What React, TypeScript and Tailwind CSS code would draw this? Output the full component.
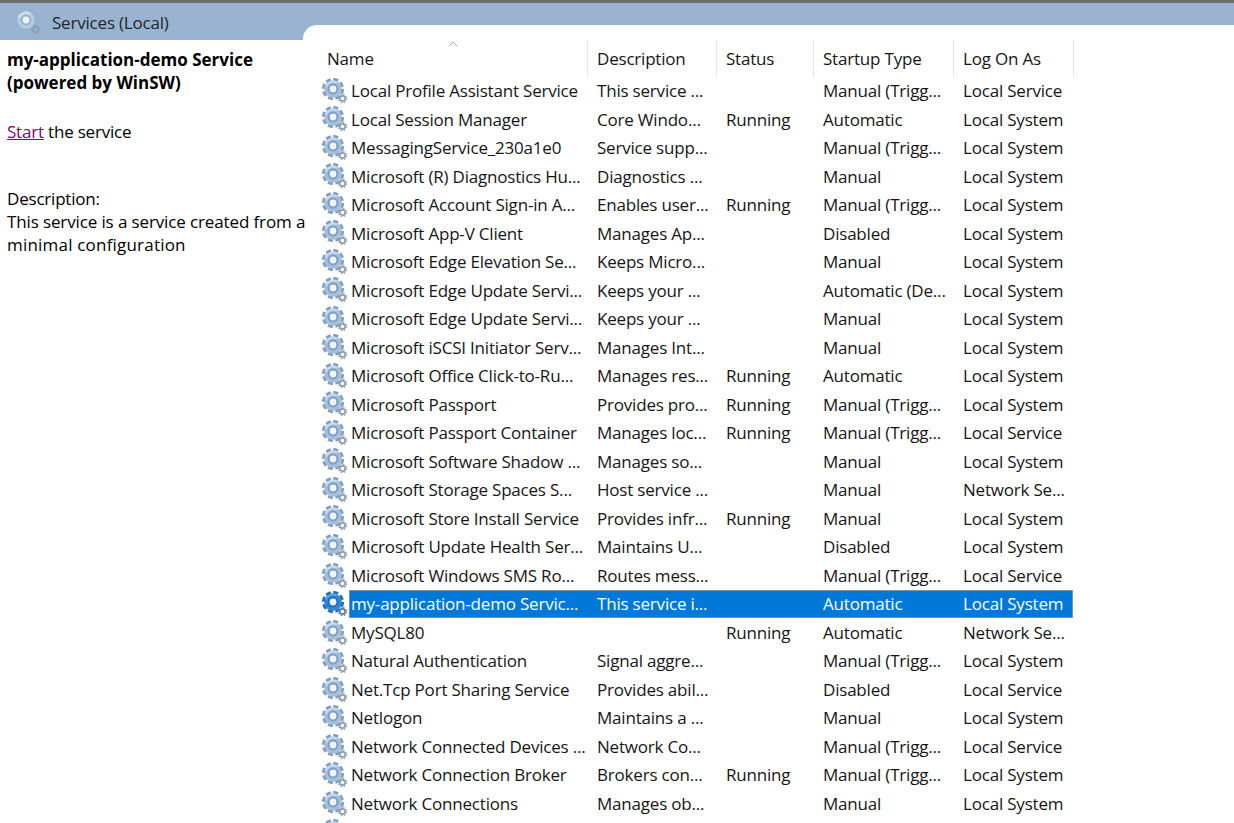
import React from "react";

type Service = { name: string; desc: string; status: string; startup: string; logon: string };

const services: Service[] = [
  { name: "Local Profile Assistant Service", desc: "This service ...", status: "", startup: "Manual (Trigg...", logon: "Local Service" },
  { name: "Local Session Manager", desc: "Core Windo...", status: "Running", startup: "Automatic", logon: "Local System" },
  { name: "MessagingService_230a1e0", desc: "Service supp...", status: "", startup: "Manual (Trigg...", logon: "Local System" },
  { name: "Microsoft (R) Diagnostics Hu...", desc: "Diagnostics ...", status: "", startup: "Manual", logon: "Local System" },
  { name: "Microsoft Account Sign-in A...", desc: "Enables user...", status: "Running", startup: "Manual (Trigg...", logon: "Local System" },
  { name: "Microsoft App-V Client", desc: "Manages Ap...", status: "", startup: "Disabled", logon: "Local System" },
  { name: "Microsoft Edge Elevation Se...", desc: "Keeps Micro...", status: "", startup: "Manual", logon: "Local System" },
  { name: "Microsoft Edge Update Servi...", desc: "Keeps your ...", status: "", startup: "Automatic (De...", logon: "Local System" },
  { name: "Microsoft Edge Update Servi...", desc: "Keeps your ...", status: "", startup: "Manual", logon: "Local System" },
  { name: "Microsoft iSCSI Initiator Serv...", desc: "Manages Int...", status: "", startup: "Manual", logon: "Local System" },
  { name: "Microsoft Office Click-to-Ru...", desc: "Manages res...", status: "Running", startup: "Automatic", logon: "Local System" },
  { name: "Microsoft Passport", desc: "Provides pro...", status: "Running", startup: "Manual (Trigg...", logon: "Local System" },
  { name: "Microsoft Passport Container", desc: "Manages loc...", status: "Running", startup: "Manual (Trigg...", logon: "Local Service" },
  { name: "Microsoft Software Shadow ...", desc: "Manages so...", status: "", startup: "Manual", logon: "Local System" },
  { name: "Microsoft Storage Spaces S...", desc: "Host service ...", status: "", startup: "Manual", logon: "Network Se..." },
  { name: "Microsoft Store Install Service", desc: "Provides infr...", status: "Running", startup: "Manual", logon: "Local System" },
  { name: "Microsoft Update Health Ser...", desc: "Maintains U...", status: "", startup: "Disabled", logon: "Local System" },
  { name: "Microsoft Windows SMS Ro...", desc: "Routes mess...", status: "", startup: "Manual (Trigg...", logon: "Local Service" },
  { name: "my-application-demo Servic...", desc: "This service i...", status: "", startup: "Automatic", logon: "Local System" },
  { name: "MySQL80", desc: "", status: "Running", startup: "Automatic", logon: "Network Se..." },
  { name: "Natural Authentication", desc: "Signal aggre...", status: "", startup: "Manual (Trigg...", logon: "Local System" },
  { name: "Net.Tcp Port Sharing Service", desc: "Provides abil...", status: "", startup: "Disabled", logon: "Local Service" },
  { name: "Netlogon", desc: "Maintains a ...", status: "", startup: "Manual", logon: "Local System" },
  { name: "Network Connected Devices ...", desc: "Network Co...", status: "", startup: "Manual (Trigg...", logon: "Local Service" },
  { name: "Network Connection Broker", desc: "Brokers con...", status: "Running", startup: "Manual (Trigg...", logon: "Local System" },
  { name: "Network Connections", desc: "Manages ob...", status: "", startup: "Manual", logon: "Local System" },
  { name: "", desc: "", status: "", startup: "", logon: "" },
];

const Gear = ({ main, dark, small, shine }: { main: string; dark: string; small: string; shine: string }) => (
  <svg viewBox="0 0 26 26" className="h-[26px] w-[26px]">
    <circle cx="11" cy="11" r="9.6" fill="none" stroke={dark} strokeWidth="3" strokeDasharray="5 2.54" />
    <circle cx="11" cy="11" r="8.8" fill={main} />
    <path d="M3.8 8.5a8 8 0 0 1 11-4" fill="none" stroke={shine} strokeWidth="2" />
    <circle cx="11" cy="11" r="4.4" fill="#eef4fa" stroke={dark} strokeWidth="2" />
    <circle cx="20.5" cy="20.5" r="3.9" fill="none" stroke={small} strokeWidth="1.6" strokeDasharray="1.6 1.46" />
    <circle cx="20.5" cy="20.5" r="2.6" fill="none" stroke={small} strokeWidth="1.6" />
  </svg>
);

const Row = ({ s, selected }: { s: Service; selected: boolean }) => (
  <div className="flex h-[28.52px] w-[756px] shrink-0">
    <div className="flex w-[32px] shrink-0 items-center pl-[5px]">
      {selected ? (
        <Gear main="#2f86d6" dark="#1f70bd" small="#5b7fa3" shine="#5ea6e6" />
      ) : (
        <Gear main="#a3bfdd" dark="#7f9dbf" small="#939fad" shine="#c9dcef" />
      )}
    </div>
    <div
      className={
        selected
          ? "grid flex-1 grid-cols-[238px_129px_97px_140px_120px] items-center whitespace-nowrap bg-[#0078d7] text-white outline outline-1 -outline-offset-1 outline-[#8a8f96]"
          : "grid flex-1 grid-cols-[238px_129px_97px_140px_120px] items-center whitespace-nowrap"
      }
    >
      <div className="pl-[2px]">{s.name}</div>
      <div className="pl-[10px]">{s.desc}</div>
      <div className="pl-[10px]">{s.status}</div>
      <div className="pl-[10px]">{s.startup}</div>
      <div className="pl-[10px]">{s.logon}</div>
    </div>
  </div>
);

const headers = ["Name", "Description", "Status", "Startup Type", "Log On As"];

export default function App() {
  return (
    <div className="flex h-[823px] w-[1234px] flex-col overflow-hidden bg-white font-['Open_Sans','Noto_Sans',sans-serif] text-[17px] tracking-[-0.2px] text-[#161616]">
      <div className="h-[3px] shrink-0 bg-[#6e6e6e]" />
      <div className="flex h-[37px] shrink-0 items-start bg-[#9ab3d1] pl-[15px] pt-[6px]">
        <Gear main="#b4cbe4" dark="#98b1cd" small="#8f9fb2" shine="#d3e1f0" />
        <span className="ml-[11px] mt-[1px] text-[#22262b]">Services (Local)</span>
      </div>
      <div className="flex min-h-0 flex-1">
        <div className="relative z-10 w-[303px] shrink-0 pl-[7px] pt-[8px] leading-[23px] text-black">
          <div className="whitespace-nowrap font-bold tracking-[0px]">
            my-application-demo Service
            <br />
            (powered by WinSW)
          </div>
          <div className="mt-[26px]">
            <a className="text-[#800080] underline">Start</a> the service
          </div>
          <div className="mt-[44px]">Description:</div>
          <div className="whitespace-nowrap tracking-[-0.125px]">This service is a service created from a</div>
          <div className="tracking-[0.2px]">minimal configuration</div>
        </div>
        <div className="-mt-[15px] flex min-w-0 flex-1 flex-col rounded-tl-[14px] bg-white pl-[14px] pt-[15px]">
          <div className="relative grid h-[36.5px] w-[756px] shrink-0 grid-cols-[270px_129px_97px_140px_120px] items-center">
            {headers.map((h) => (
              <div key={h} className="-mr-px flex h-full items-center border-r border-[#e5e5e5] pl-[10px]">
                {h}
              </div>
            ))}
            <svg viewBox="0 0 10 6" className="absolute left-[131px] top-[1px] h-[6px] w-[10px]">
              <path d="M1 5l4-4 4 4" fill="none" stroke="#a0a6ad" strokeWidth="1" />
            </svg>
          </div>
          {services.map((s, i) => (
            <Row key={i} s={s} selected={i === 18} />
          ))}
        </div>
      </div>
    </div>
  );
}
